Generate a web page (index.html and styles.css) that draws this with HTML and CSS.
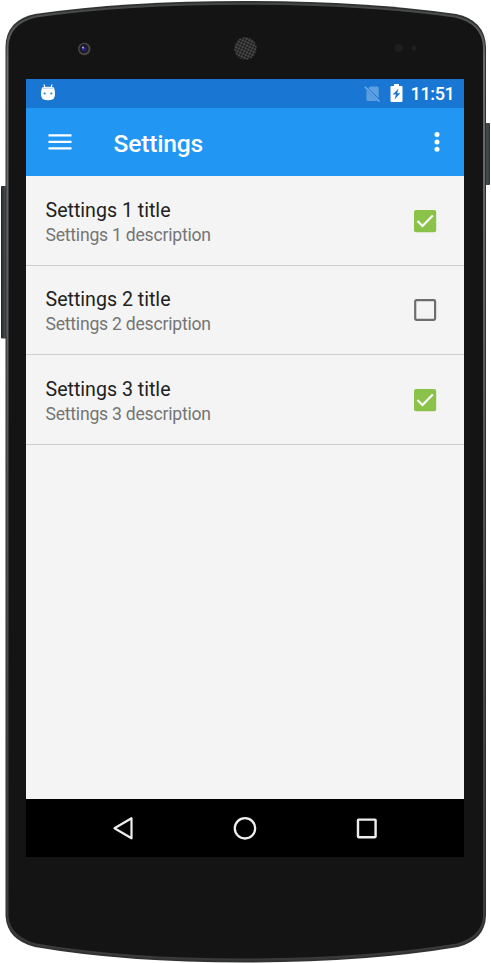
FILE: index.html
```html
<!DOCTYPE html>
<html lang="en">
<head>
<meta charset="utf-8">
<title>Settings</title>
<link rel="stylesheet" href="styles.css">
</head>
<body>
<div class="phone">
  <svg class="frame" width="491" height="963" viewBox="0 0 491 963" aria-hidden="true">
    <defs>
      <linearGradient id="key" x1="0" x2="1" y1="0" y2="0"><stop offset="0" stop-color="#222526"/><stop offset=".6" stop-color="#484c4d"/><stop offset="1" stop-color="#303233"/></linearGradient>
      <linearGradient id="rim" x1="0" x2="0" y1="0" y2="1"><stop offset="0" stop-color="#424544"/><stop offset=".06" stop-color="#6a6c6e"/><stop offset=".35" stop-color="#5d5e62"/><stop offset=".8" stop-color="#414244"/><stop offset="1" stop-color="#3a3a3a"/></linearGradient>
      <pattern id="mesh" width="3" height="3" patternUnits="userSpaceOnUse" patternTransform="rotate(25)"><rect width="3" height="3" fill="#5a5a5a"/><circle cx="1.500" cy="1.500" r="1.200" fill="#111"/></pattern>
    </defs>
    <rect x="1" y="186" width="7" height="152.500" rx="1" fill="url(#key)"/>
    <rect x="483" y="123" width="7" height="62" rx="1" fill="url(#key)"/>
    <path d="M5.500 47Q6 20 35 14Q125 1 245 1Q365 1 456 14Q485 20 486 47V916Q485 940 458 947Q365 962.500 245 962.500Q125 962.500 35 947Q7 940 5.500 916Z" fill="#303132"/>
    <path d="M7.500 47Q8 23 36 16.500Q125 3.700 245 3.700Q365 3.700 455 16.500Q483 23 484 47V916Q483 937 457 944.500Q365 959.500 245 959.500Q125 959.500 36 944.500Q9 937 7.500 916Z" fill="#141414" stroke="url(#rim)" stroke-width="2"/>
    <circle cx="84.300" cy="49" r="6.200" fill="#4b4948"/><circle cx="84" cy="48.700" r="4.600" fill="#1b1a24"/><circle cx="84" cy="49" r="2.300" fill="#25208c"/><circle cx="83" cy="47.600" r="1.100" fill="#a3a7c5"/>
    <circle cx="245.500" cy="48.500" r="11.200" fill="url(#mesh)"/>
    <circle cx="398.500" cy="48" r="4" fill="#211c1b"/><circle cx="414" cy="48" r="2.600" fill="#211e1d"/>
  </svg>
  <main class="screen">
    <div class="status">
      <svg class="robot" width="16" height="19" viewBox="0 0 16 19"><path d="M4 1.500 5 5M12 1.500 11 5" stroke="#fff" stroke-width="1.200"/><path d="M2 4.500Q8 3 14 4.500L15 9Q15.500 13 13.500 16Q8 18.500 2.500 16Q.5 13 1 9Z" fill="#fff"/><path d="M3 5.600Q8 4.600 13 5.600" stroke="#8bb9ea" stroke-width=".6" fill="none"/><circle cx="4.600" cy="10.500" r="1" fill="#1976d2"/><circle cx="11.400" cy="10.500" r="1" fill="#1976d2"/></svg>
      <svg class="sim" width="17" height="18" viewBox="0 0 17 18"><path d="M6 1.500H13Q14.700 1.500 14.700 3V13.200L4.200 3.200ZM2.500 5.300 13.700 16H4Q2.500 16 2.500 14.500Z" fill="#5e9fe0"/><path d="M.8 1.800 15.500 16.500" stroke="#75ade4" stroke-width="1.300"/></svg>
      <svg class="battery" width="13" height="18" viewBox="0 0 13 18"><path d="M4 0H9V2H11.500Q12.500 2 12.500 3V17Q12.500 18 11.500 18H1.500Q.5 18 .5 17V3Q.5 2 1.500 2H4Z" fill="#fff"/><path d="M8.500 4.500 2.800 10.500H6L4.500 15.500 10.300 9.200H7.200Z" fill="#1976d2"/></svg>
      <span class="time">11:51</span>
    </div>
    <header class="bar">
      <svg class="menu" width="24" height="18" viewBox="0 0 24 18"><path d="M.5 2.300H23.500M.5 8.800H23.500M.5 15.300H23.500" stroke="#fff" stroke-width="2.300"/></svg>
      <h1>Settings</h1>
      <svg class="more" width="6" height="22" viewBox="0 0 6 22"><g fill="#fff"><circle cx="3" cy="3.600" r="2.500"/><circle cx="3" cy="10.900" r="2.500"/><circle cx="3" cy="18.200" r="2.500"/></g></svg>
    </header>
    <ul class="list">
      <li><div><h2>Settings 1 title</h2><p>Settings 1 description</p></div>
        <svg width="24" height="24" viewBox="0 0 24 24"><rect x="1" y="1" width="22.200" height="22.200" rx="2" fill="#8bc34a"/><path d="M4.500 12 9.500 17 19.800 6.600" fill="none" stroke="#fff" stroke-width="2.100"/></svg></li>
      <li><div><h2>Settings 2 title</h2><p>Settings 2 description</p></div>
        <svg width="24" height="24" viewBox="0 0 24 24"><rect x="2.200" y="2.200" width="19.900" height="19.600" rx="1.200" fill="none" stroke="#6d6d6d" stroke-width="2.200"/></svg></li>
      <li><div><h2>Settings 3 title</h2><p>Settings 3 description</p></div>
        <svg width="24" height="24" viewBox="0 0 24 24"><rect x="1" y="1" width="22.200" height="22.200" rx="2" fill="#8bc34a"/><path d="M4.500 12 9.500 17 19.800 6.600" fill="none" stroke="#fff" stroke-width="2.100"/></svg></li>
    </ul>
    <nav class="nav">
      <svg width="24" height="24" viewBox="0 0 24 24"><path d="M20.500 2.200V22.300L3.500 12.300Z" fill="none" stroke="#eee" stroke-width="2.200" stroke-linejoin="round"/></svg>
      <svg width="24" height="24" viewBox="0 0 24 24"><circle cx="12" cy="12.300" r="10.200" fill="none" stroke="#eee" stroke-width="2.300"/></svg>
      <svg width="24" height="24" viewBox="0 0 24 24"><rect x="3" y="3.600" width="17.600" height="17.600" rx=".6" fill="none" stroke="#eee" stroke-width="2.400"/></svg>
    </nav>
  </main>
</div>
</body>
</html>
```
FILE: styles.css
```css
* { box-sizing: border-box; }
body { margin: 0; background: #fff; font-family: Roboto, sans-serif; overflow: hidden; }
svg { display: block; flex: none; }
h1, h2, p, ul { margin: 0; padding: 0; }
.phone { position: relative; width: 491px; height: 963px; padding: 79px 27px 106px 26px; }
.frame { position: absolute; inset: 0; }
.screen { position: relative; height: 778px; display: flex; flex-direction: column; background: #f4f4f4; }
.status { height: 29px; flex: none; display: flex; align-items: center; padding: 0 9.5px 0 14px; background: #1976d2; }
.robot { margin-top: -3px; }
.sim { margin-left: auto; }
.battery { margin-left: 9px; margin-top: -1px; }
.time { margin-left: 8px; padding-top: 1px; color: #fff; font-size: 18px; font-weight: 500; line-height: 28px; letter-spacing: -0.35px; }
.bar { height: 68px; flex: none; display: flex; align-items: center; padding: 0 24px 0 22px; background: #2196f3; color: #fff; }
.bar h1 { margin-left: 41.5px; padding-top: 3px; font-size: 24.6px; font-weight: 500; line-height: 30px; letter-spacing: -0.2px; }
.more { margin-left: auto; }
.list { flex: 1; padding-top: 0.4px; list-style: none; }
.list li { height: 89.5px; display: flex; align-items: center; justify-content: space-between; padding: 0 27px 0 19.5px; border-bottom: 1px solid #cfcfcf; }
.list li > div { padding-top: 3px; }
.list h2 { color: #212121; font-size: 19.6px; font-weight: 400; line-height: 26px; }
.list p { color: #757575; font-size: 17.6px; line-height: 23px; letter-spacing: -0.23px; }
.nav { height: 58px; flex: none; display: flex; align-items: center; justify-content: space-between; padding: 0 85px; background: #000; }
```
